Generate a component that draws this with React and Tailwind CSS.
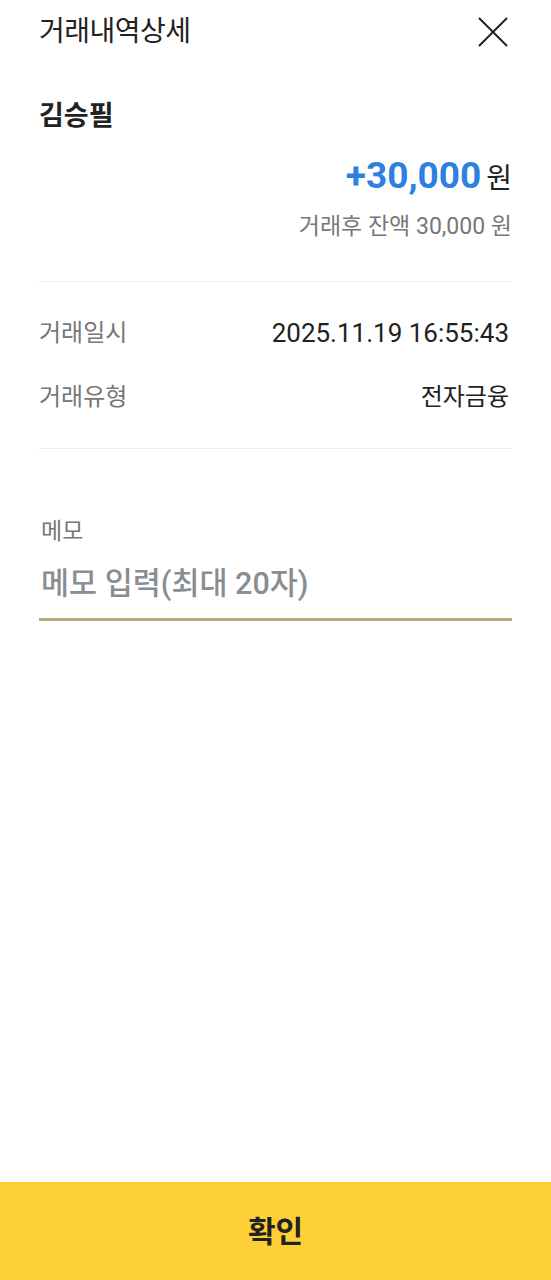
const CloseIcon = () => (
  <svg width="30" height="30" viewBox="0 0 30 30" className="text-[#222]">
    <path d="M1.5 1.5 L28.5 28.5 M28.5 1.5 L1.5 28.5" stroke="currentColor" strokeWidth="2" strokeLinecap="round" fill="none" />
  </svg>
);

const App = () => {
  return (
    <div className="w-full min-h-screen bg-white flex flex-col font-[Roboto,'Noto_Sans_CJK_KR',sans-serif]">
      <div className="flex-1 px-[39px]">
        {/* Header */}
        <div className="flex items-center justify-between h-[64px]">
          <h1 className="text-[28px] text-[#222] font-normal tracking-[-0.5px]">거래내역상세</h1>
          <div className="mr-[4px]">
            <CloseIcon />
          </div>
        </div>

        {/* Name & amount */}
        <div className="mt-[36px]">
          <p className="text-[27px] font-bold text-[#222] leading-[32px]">김승필</p>
          <div className="flex items-baseline justify-end mt-[22px] leading-[44px]">
            <span className="text-[37px] font-bold text-[#2f7fe0]">+30,000</span>
            <span className="text-[28px] text-[#222] ml-[5px]">원</span>
          </div>
          <p className="text-right text-[23px] text-[#777] mt-[11px] leading-[30px]">거래후 잔액 30,000 원</p>
        </div>

        <div className="border-t border-[#ececec] mt-[39px]" />

        {/* Details */}
        <div className="pt-[33px] pb-[33px] flex flex-col gap-[28px]">
          <div className="flex items-center justify-between leading-[36px]">
            <span className="text-[24px] text-[#777]">거래일시</span>
            <span className="text-[26px] text-[#222] mr-[3px]">2025.11.19 16:55:43</span>
          </div>
          <div className="flex items-center justify-between leading-[36px]">
            <span className="text-[24px] text-[#777]">거래유형</span>
            <span className="text-[24px] text-[#222] mr-[3px]">전자금융</span>
          </div>
        </div>

        <div className="border-t border-[#ececec]" />

        {/* Memo */}
        <div className="mt-[68px]">
          <p className="text-[23px] text-[#777] leading-[30px] pl-[2px]">메모</p>
          <input
            type="text"
            placeholder="메모 입력(최대 20자)"
            className="w-full mt-[16px] pb-[15px] h-[58px] leading-[40px] text-[30.5px] font-medium border-b-[3px] border-[#b8aa80] focus:outline-none placeholder:text-[#8a8d91] pl-[2px]"
          />
        </div>
      </div>

      {/* Confirm button */}
      <button className="w-full h-[98px] bg-[#fdd035] text-[30px] font-bold text-[#222]">확인</button>
    </div>
  );
};

export default App;
